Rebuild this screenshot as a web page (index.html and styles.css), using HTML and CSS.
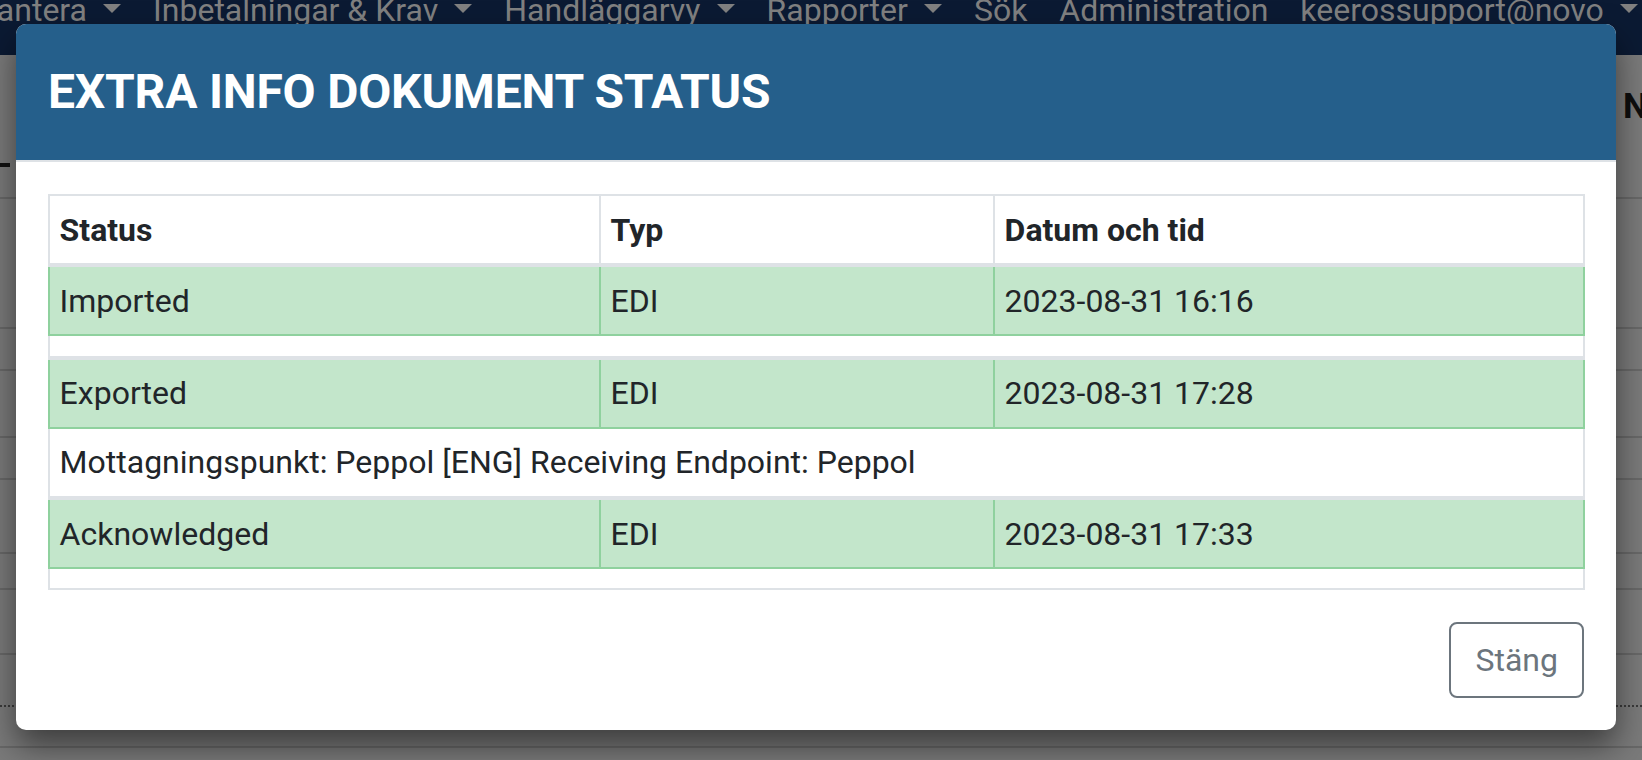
FILE: index.html
```html
<!DOCTYPE html>
<html lang="sv">
<head>
<meta charset="utf-8">
<title>Extra info dokument status</title>
<link rel="stylesheet" href="styles.css">
</head>
<body>
<div class="page">
  <nav class="navbar">
    <ul class="nav">
      <li class="nav-item">Hantera <span class="caret"></span></li>
      <li class="nav-item">Inbetalningar &amp; Krav <span class="caret"></span></li>
      <li class="nav-item">Handläggarvy <span class="caret"></span></li>
      <li class="nav-item">Rapporter <span class="caret"></span></li>
      <li class="nav-item">Sök</li>
      <li class="nav-item">Administration</li>
      <li class="nav-item">keerossupport@novo <span class="caret"></span></li>
    </ul>
  </nav>
  <div class="bg-rows">
    <div class="bg-row r1"><span class="dash"></span><span class="page-title">N</span></div>
    <div class="bg-row r2"></div>
    <div class="bg-row r3"></div>
    <div class="bg-row r4"></div>
    <div class="bg-row r5"></div>
    <div class="bg-row r6"></div>
    <div class="bg-row r7"></div>
    <div class="bg-row r8"></div>
    <div class="bg-row r9 dotted"></div>
    <div class="bg-row r10"></div>
  </div>
</div>

<div class="modal">
  <div class="modal-header">
    <h4 class="modal-title">EXTRA INFO DOKUMENT STATUS</h4>
  </div>
  <div class="modal-body">
    <table class="status-table">
      <colgroup>
        <col class="col-status">
        <col class="col-type">
        <col class="col-date">
      </colgroup>
      <thead>
        <tr><th>Status</th><th>Typ</th><th>Datum och tid</th></tr>
      </thead>
      <tbody>
        <tr class="row-success"><td>Imported</td><td>EDI</td><td>2023-08-31 16:16</td></tr>
        <tr><td colspan="3"></td></tr>
      </tbody>
      <tbody>
        <tr class="row-success"><td>Exported</td><td>EDI</td><td>2023-08-31 17:28</td></tr>
        <tr><td colspan="3">Mottagningspunkt: Peppol [ENG] Receiving Endpoint: Peppol</td></tr>
      </tbody>
      <tbody>
        <tr class="row-success"><td>Acknowledged</td><td>EDI</td><td>2023-08-31 17:33</td></tr>
        <tr><td colspan="3"></td></tr>
      </tbody>
    </table>
  </div>
  <div class="modal-footer">
    <button class="btn-close" type="button">Stäng</button>
  </div>
</div>
</body>
</html>
```

FILE: styles.css
```css
* {
  box-sizing: border-box;
}

html, body {
  margin: 0;
  padding: 0;
  height: 760px;
  overflow: hidden;
}

body {
  background: #7a7a7a;
  font-family: Roboto, "Liberation Sans", sans-serif;
  color: #212529;
  position: relative;
}

/* ---------- background page (dimmed) ---------- */
.navbar {
  height: 55px;
  background: #0b1a33;
  overflow: hidden;
}

.nav {
  display: flex;
  list-style: none;
  margin: -14px 0 0 -42px;
  padding: 0;
  font-size: 32px;
  line-height: 48px;
  color: #808080;
  white-space: nowrap;
}

.nav-item {
  padding: 0 16px;
  flex: none;
}

.caret {
  display: inline-block;
  width: 0;
  height: 0;
  margin-left: 0.255em;
  vertical-align: 0.255em;
  border-top: 0.3em solid #808080;
  border-right: 0.3em solid transparent;
  border-left: 0.3em solid transparent;
}

.bg-rows {
  display: flex;
  flex-direction: column;
}

.bg-row {
  border-bottom: 2px solid #686868;
  flex: none;
}

.bg-row.dotted {
  border-bottom: 2px dotted #3a3a3a;
}

.r1 { height: 144px; display: flex; align-items: flex-start; }
.r2 { height: 130px; }
.r3 { height: 42px; }
.r4 { height: 67px; }
.r5 { height: 42px; }
.r6 { height: 74px; }
.r7 { height: 36px; }
.r8 { height: 65px; }
.r9 { height: 52px; }
.r10 { height: 41px; }

.dash {
  width: 10px;
  height: 4px;
  margin-top: 108px;
  background: #111;
  flex: none;
}

.page-title {
  margin-left: auto;
  flex: 0 0 19px;
  min-width: 0;
  margin-top: 31px;
  font-size: 35px;
  line-height: 42px;
  font-weight: 700;
  color: #0e0e0e;
  white-space: nowrap;
}

/* ---------- modal ---------- */
.modal {
  position: absolute;
  top: 24px;
  left: 16px;
  width: 1600px;
  background: #fff;
  border-radius: 10px;
  box-shadow: 0 16px 32px rgba(0, 0, 0, 0.5);
}

.modal-header {
  background: #255f8b;
  padding: 32px;
  border-bottom: 2px solid #dee2e6;
  border-radius: 10px 10px 0 0;
}

.modal-title {
  margin: 0;
  font-size: 48px;
  line-height: 72px;
  font-weight: 700;
  letter-spacing: -0.2px;
  color: #fff;
}

.modal-body {
  padding: 32px;
}

.status-table {
  width: 1535px;
  table-layout: fixed;
  border-collapse: collapse;
  border: 2px solid #dee2e6;
  font-size: 32px;
  line-height: 48px;
  color: #212529;
}

.col-status { width: 551px; }
.col-type { width: 394px; }
.col-date { width: 590px; }

.status-table th,
.status-table td {
  padding: 9.6px;
  border: 2px solid #dee2e6;
  text-align: left;
  vertical-align: top;
  background: #fff;
}

.status-table th {
  font-weight: 700;
}

.status-table thead th {
  vertical-align: bottom;
  border-bottom-width: 4px;
}

.status-table tbody + tbody {
  border-top: 4px solid #dee2e6;
}

.status-table .row-success td {
  background: #c3e6cb;
  border-color: #8fd19e;
}

.modal-footer {
  display: flex;
  justify-content: flex-end;
  padding: 0 32px 32px;
}

.btn-close {
  font-family: Roboto, "Liberation Sans", sans-serif;
  font-size: 32px;
  line-height: 48px;
  padding: 12px 24px;
  color: #6c757d;
  background: #fff;
  border: 2px solid #6c757d;
  border-radius: 8px;
}
```
